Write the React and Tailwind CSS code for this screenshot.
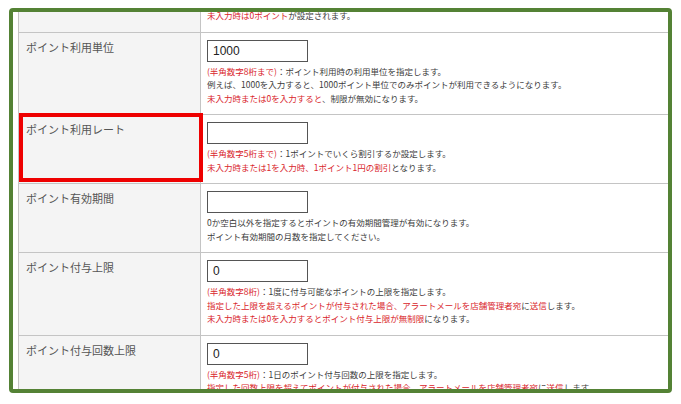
// App.jsx
// Point settings table (scrolled view) inside a green-framed capture, with a red highlight box.

const jp = { fontFamily: '"Noto Sans CJK JP", "Noto Sans", sans-serif' }

const R = ({ children }) => <span className="text-[#d9252b]">{children}</span>

const rows = [
  {
    label: 'ポイント利用単位',
    value: '1000',
    lines: [
      <><R>(半角数字8桁まで)</R>：ポイント利用時の利用単位を指定します。</>,
      <>例えば、1000を入力すると、1000ポイント単位でのみポイントが利用できるようになります。</>,
      <><R>未入力時または0を入力すると</R>、制限が無効になります。</>,
    ],
  },
  {
    label: 'ポイント利用レート',
    value: '',
    lines: [
      <><R>(半角数字5桁まで)</R>：1ポイントでいくら割引するか設定します。</>,
      <><R>未入力時または1を入力時、1ポイント1円の割引</R>となります。</>,
    ],
  },
  {
    label: 'ポイント有効期間',
    value: '',
    lines: [
      <>0か空白以外を指定するとポイントの有効期間管理が有効になります。</>,
      <>ポイント有効期間の月数を指定してください。</>,
    ],
  },
  {
    label: 'ポイント付与上限',
    value: '0',
    lines: [
      <><R>(半角数字8桁)</R>：1度に付与可能なポイントの上限を指定します。</>,
      <><R>指定した上限を超えるポイントが付与された場合、アラートメールを店舗管理者宛</R>に<R>送信</R>します。</>,
      <><R>未入力時または0を入力するとポイント付与上限が無制限</R>になります。</>,
    ],
  },
  {
    label: 'ポイント付与回数上限',
    value: '0',
    lines: [
      <><R>(半角数字5桁)</R>：1日のポイント付与回数の上限を指定します。</>,
      <><R>指定した回数上限を超えてポイントが付与された場合、アラートメールを店舗管理者宛</R>に<R>送信</R>します。</>,
    ],
  },
]

function Row({ label, value, lines }) {
  return (
    <div className="grid grid-cols-[183px_1fr] border-b border-[#c4c4c4]">
      <div className="bg-[#f4f4f4] border-l border-r border-[#c4c4c4] pl-[7px] pt-[6px] text-[11px] leading-[16px] text-[#555]">
        {label}
      </div>
      <div className="pl-[6px] pt-[7px] pb-[9px]">
        <div
          className="w-[101px] h-[22px] border border-[#555] bg-white pl-[5px] text-[12px] leading-[20px] text-[#222]"
          style={{ fontFamily: '"Liberation Sans", Arial, sans-serif' }}
        >
          {value}
        </div>
        <div className="mt-[3px] text-[8.5px] leading-[13.5px] text-[#3c3c3c] whitespace-nowrap">
          {lines.map((l, i) => (
            <div key={i}>{l}</div>
          ))}
        </div>
      </div>
    </div>
  )
}

export default function App() {
  return (
    <div className="relative w-[681px] h-[404px] bg-white overflow-hidden" style={jp}>
      <div className="ml-[9px] mt-[8px] w-[663px] h-[385px] border-4 border-[#548235] rounded-[4px] bg-white pl-[5px] overflow-hidden">
        {/* tail of the row above, scrolled out of view */}
        <div className="-mt-[3px] grid grid-cols-[183px_1fr] border-b border-[#c4c4c4]">
          <div className="bg-[#f4f4f4] border-l border-r border-[#c4c4c4]" />
          <div className="pl-[6px] pb-[9px] text-[8.5px] leading-[13.5px] text-[#3c3c3c] whitespace-nowrap">
            <R>未入力時は0ポイント</R>が設定されます。
          </div>
        </div>
        {rows.map((r) => (
          <Row key={r.label} {...r} />
        ))}
      </div>

      {/* highlight */}
      <div className="absolute left-[19px] top-[113px] w-[184px] h-[69px] border-4 border-[#ee0000]" />
    </div>
  )
}
